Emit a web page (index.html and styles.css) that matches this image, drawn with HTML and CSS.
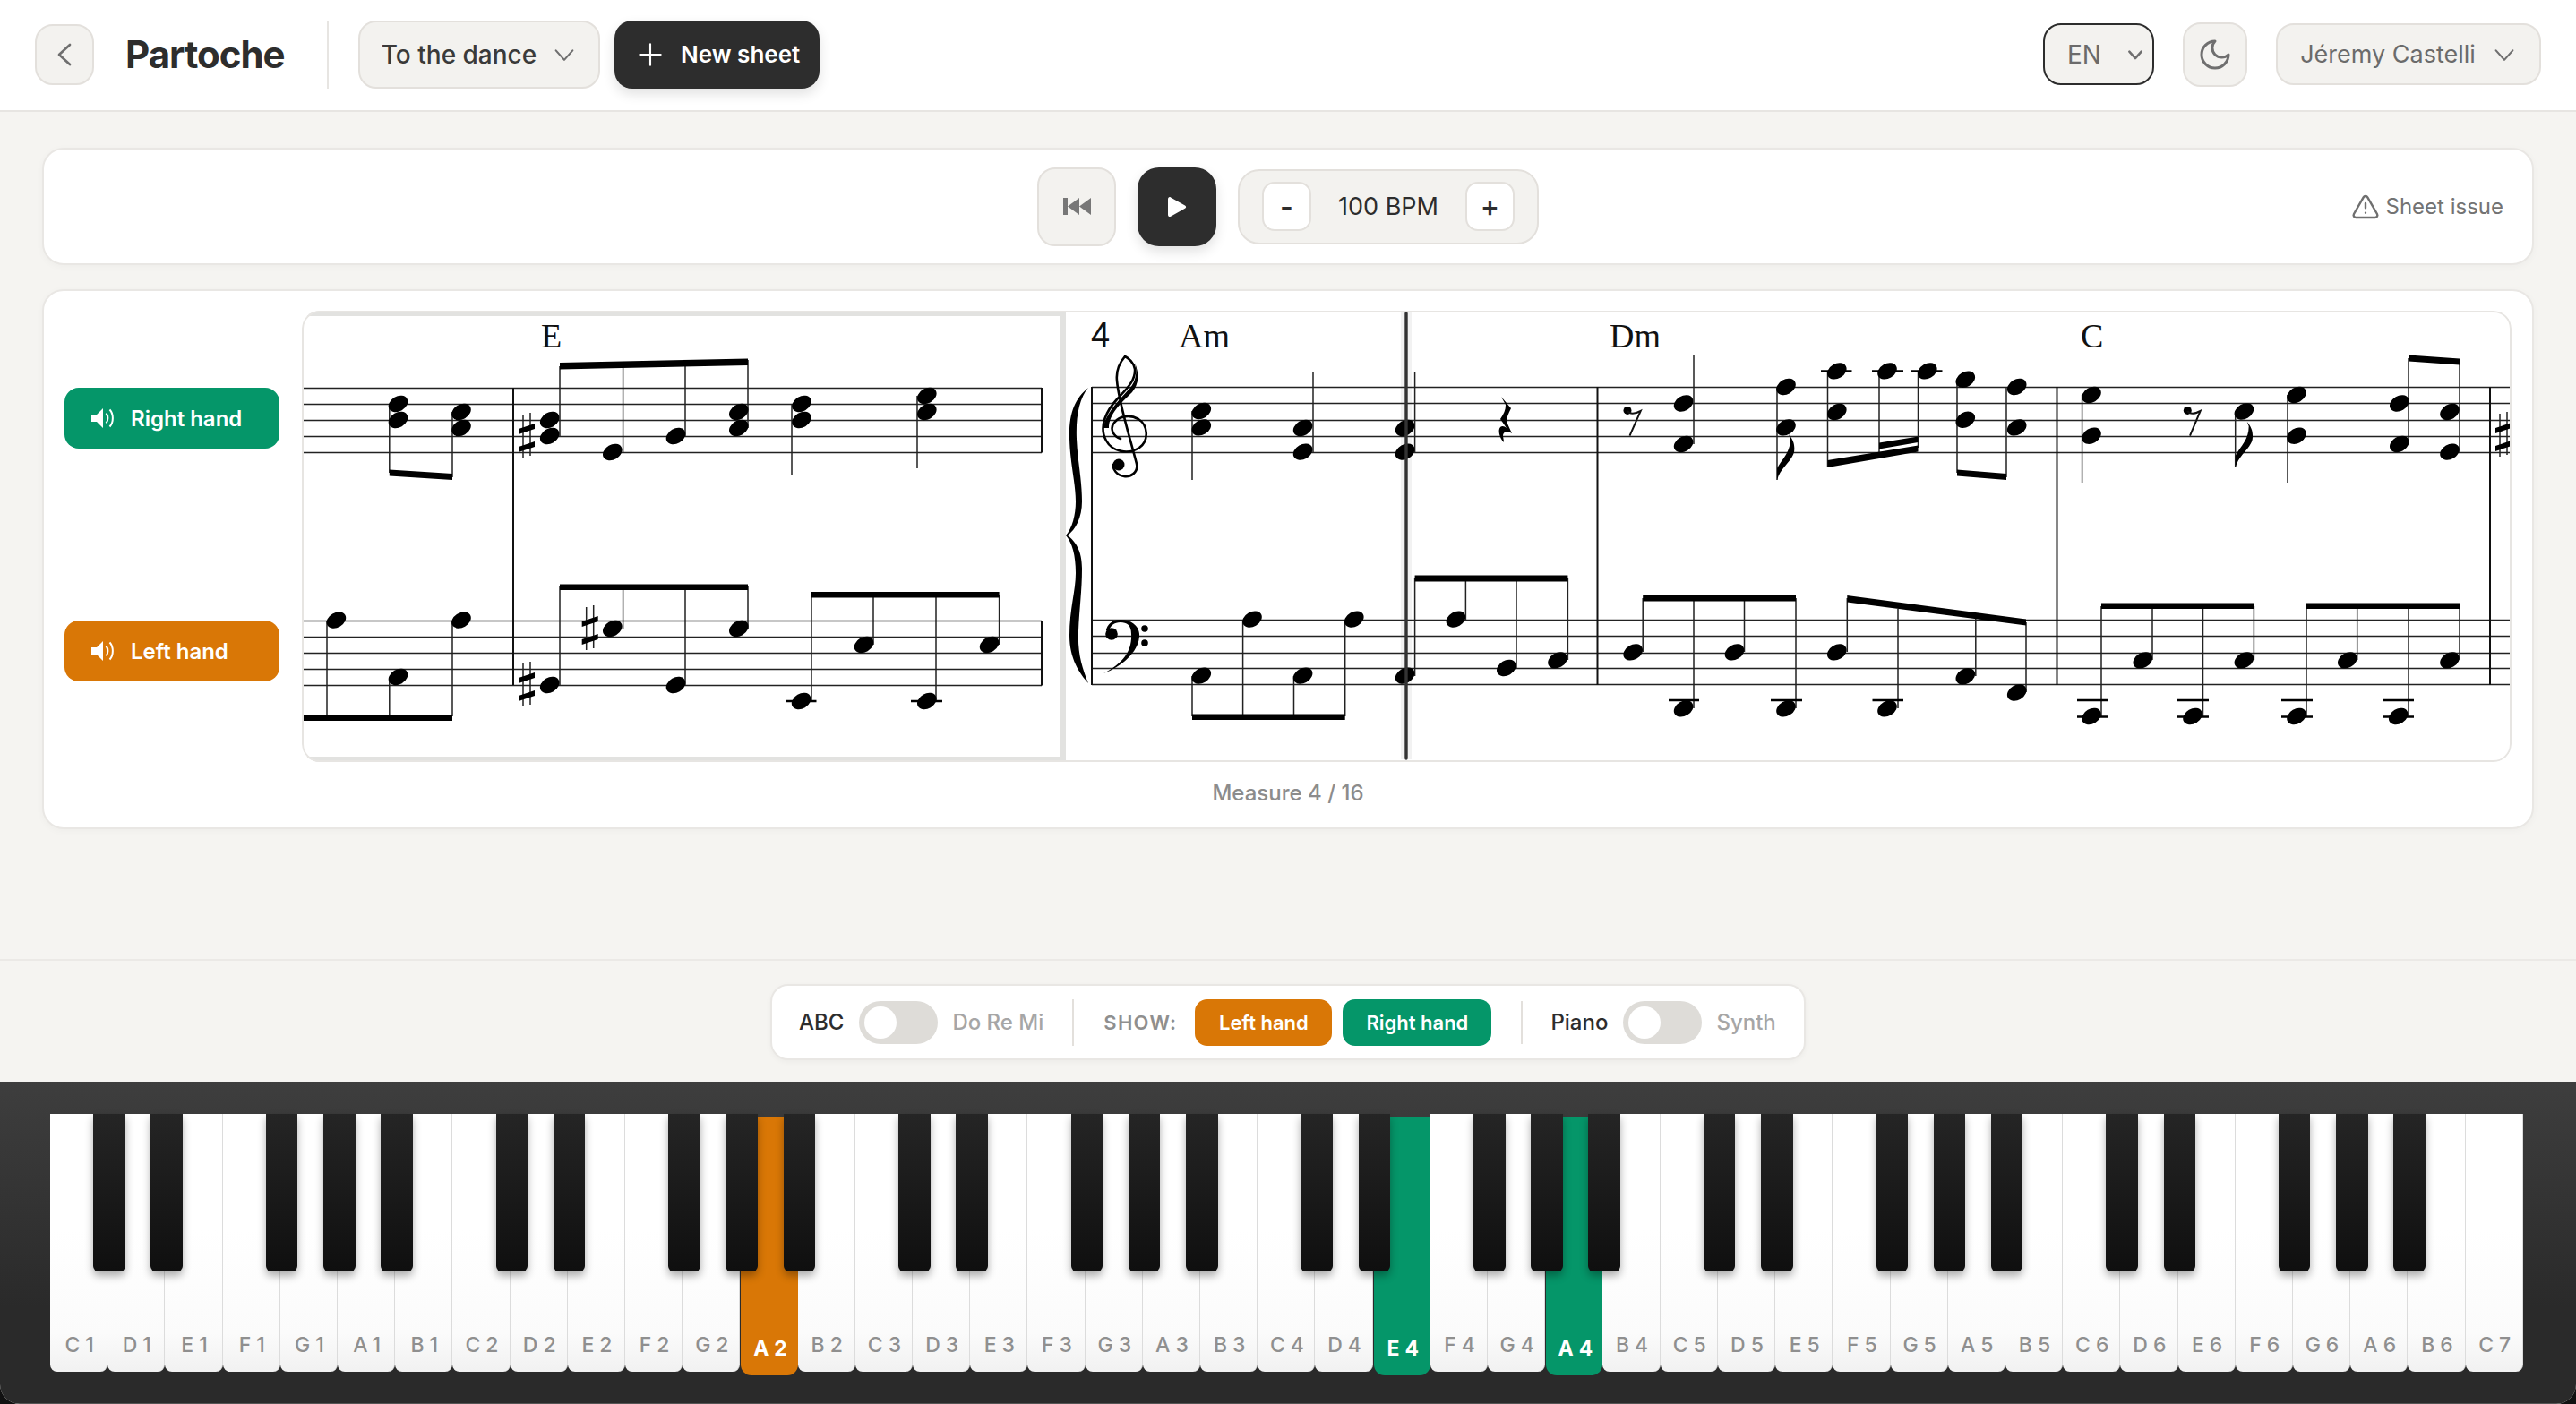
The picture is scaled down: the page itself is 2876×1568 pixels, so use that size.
FILE: index.html
```html
<!DOCTYPE html>
<html lang="en">
<head>
<meta charset="utf-8">
<title>Partoche</title>
<link rel="stylesheet" href="styles.css">
</head>
<body>
<div class="app">
  <header class="topbar">
    <button class="ctl back"><svg class="ico" width="36" height="36" viewBox="0 0 24 24"><path d="M16 4.600 8 12l8 7.400"/></svg></button>
    <div class="brand">Partoche</div>
    <div class="vsep"></div>
    <button class="ctl sheet-select">To the dance<svg class="ico" width="28" height="28" viewBox="0 0 24 24"><path d="m4 8 8 9 8-9"/></svg></button>
    <button class="new-sheet"><svg class="ico-w" width="28" height="28" viewBox="0 0 24 24"><path d="M12 2v20M2 12h20"/></svg>New sheet</button>
    <div class="spacer"></div>
    <button class="ctl lang">EN<svg class="ico" width="20" height="20" viewBox="0 0 24 24"><path d="m4 8 8 9 8-9"/></svg></button>
    <button class="ctl theme"><svg class="ico" width="40" height="40" viewBox="0 0 24 24"><path d="M12 3a6 6 0 0 0 9 9 9 9 0 1 1-9-9Z"/></svg></button>
    <button class="ctl user">Jéremy Castelli<svg class="ico" width="28" height="28" viewBox="0 0 24 24"><path d="m4 8 8 9 8-9"/></svg></button>
  </header>

  <main class="main">
    <section class="card transport">
      <div></div>
      <div class="transport-center">
        <button class="ctl t-btn"><svg width="31" height="19" viewBox="0 0 31 19"><path d="M0 0h5v19H0zM5 9.500 18 0v19zM18 9.500 31 0v19z" fill="#777"/></svg></button>
        <button class="t-btn play"><svg width="24" height="24" viewBox="0 0 24 24"><path d="M2 3.500C2 1.500 3.500.6 5 1.400l16 9c1.500.9 1.500 2.500 0 3.300l-16 9c-1.500.8-3 0-3-2z" fill="#fff"/></svg></button>
        <div class="tempo">
          <button class="step">-</button>
          <span class="bpm">100 BPM</span>
          <button class="step">+</button>
        </div>
      </div>
      <button class="issue"><svg class="ico-g" width="32" height="32" viewBox="0 0 24 24"><path d="m21.730 18-8-14a2 2 0 0 0-3.480 0l-8 14A2 2 0 0 0 4 21h16a2 2 0 0 0 1.730-3"/><path d="M12 9v4M12 17h.01"/></svg>Sheet issue</button>
    </section>

    <section class="card score-card">
      <div class="score-row">
        <div class="hands">
          <button class="hand green"><svg class="spk" width="26" height="24" viewBox="0 0 26 24"><path d="M0 8h6l7-7v22l-7-7H0z" fill="#fff"/><path d="M16.500 6.500c2.500 3 2.500 8 0 11M20.500 2.500c4.500 5 4.500 14 0 19" fill="none" stroke="#fff" stroke-width="2"/></svg>Right hand</button>
          <button class="hand orange"><svg class="spk" width="26" height="24" viewBox="0 0 26 24"><path d="M0 8h6l7-7v22l-7-7H0z" fill="#fff"/><path d="M16.500 6.500c2.500 3 2.500 8 0 11M20.500 2.500c4.500 5 4.500 14 0 19" fill="none" stroke="#fff" stroke-width="2"/></svg>Left hand</button>
        </div>
        <div class="score-box">
          <svg class="score" viewBox="337 347 2467 504" width="2467" height="504">
            <defs>
              <ellipse id="n" rx="11.500" ry="8.300" transform="rotate(-30)"/>
              <g id="s">
                <path class="st" d="M-4-23V25M4-25V23"/>
                <path class="bm" d="M-9-7 9-13V-7L-9-1zM-9 13 9 7V13L-9 19z"/>
              </g>
            </defs>

            <!-- page highlight -->
            <rect class="hl" x="334" y="350" width="853" height="498"/>

            <!-- staff lines -->
            <path class="staff" d="M337 433.500H1163M337 451.500H1163M337 469.500H1163M337 487.500H1163M337 505.500H1163M337 693.500H1163M337 711.500H1163M337 729.500H1163M337 747.500H1163M337 765.500H1163"/>
            <path class="staff" d="M1219 432.500H2803M1219 450.500H2803M1219 469.500H2803M1219 487.500H2803M1219 505.500H2803M1219 692.500H2803M1219 710.500H2803M1219 729.500H2803M1219 746.500H2803M1219 764.500H2803"/>

            <!-- bar lines -->
            <path class="bar" d="M573 433V765M1163 433V505.500M1163 693V765.500M1219 432V765M1783.500 432V765M2296.500 432V765M2780 432V765"/>

            <!-- chord names -->
            <text class="chord" x="604" y="388">E</text>
            <text class="num" x="1218" y="387">4</text>
            <text class="chord" x="1316" y="388">Am</text>
            <text class="chord" x="1797" y="388">Dm</text>
            <text class="chord" x="2323" y="388">C</text>

            <!-- stems -->
            <path class="st" d="M434.800 451V528M505 460V533M625 409V487M695.600 406V505M765 404V487M835 402V478M884 451V531M1024 442V523
              M365 693V800M434.800 756V800M505 693V800M625 655V765M695.600 655V702M765 655V765M835 655V702M906 664V783M975 664V720M1045 664V783M1115.600 664V720
              M1331 459V536M1466 415V505M1579.600 415V505M1891 397V496M1984 432V536M2040.500 414V521M2098 414V508M2141.500 414V500M2185 424V528M2240 432V533M2324.600 441V539M2495.700 459V522M2554 441V539M2689 400V496M2746 404V505
              M1331 755V800M1387.600 692V800M1444.500 755V800M1501.700 692V800M1579.600 646V755M1636.400 646V692M1693 646V746M1750.400 646V737M1834.200 668V728M1891 668V791M1947.500 668V728M2005 668V791M2062.300 668V728M2119 680V791M2205.800 688V755M2262 695V773M2346 677V800M2403 677V737M2459.500 677V800M2516.400 677V737M2575 677V800M2631.700 677V737M2689 677V800M2746 677V737"/>

            <!-- beams -->
            <path class="bm" d="M434.800 524.500 505 529V536L434.800 531.500zM625 405 835 400.500V408L625 412.500zM337 798H505V805H337zM625 652.500H835V659H625zM906 661H1115.600V667.500H906z
              M1331 797.500H1501.700V804H1331zM1579.600 642.500H1750.400V649.500H1579.600zM1834.200 665H2005V671.500H1834.200zM2062.300 665 2262 691.500V698.500L2062.300 672.500zM2040.500 514 2141.500 497.500V504.500L2040.500 522zM2098 494.500 2141.500 487.500V494L2098 501.500zM2185 524.500 2240 529V536L2185 531.500zM2689 396.500 2746 400.500V407.500L2689 403.500zM2346 673.500H2516.400V680H2346zM2575 673.500H2746V680H2575z"/>

            <!-- ledger lines -->
            <path class="led" d="M878 783H911.500M1017 783H1052M2033 414.500H2067.500M2090 414.500H2125M2134 414.500H2168.500M1863 782H1897M1977 782H2012M2090.500 782H2125M2319 782H2353M2319 800.500H2353M2431 782H2466M2431 800.500H2466M2547 782H2582M2547 800.500H2582M2660 782H2695M2660 800.500H2695"/>

            <!-- note heads, left page -->
            <use href="#n" x="444.500" y="451"/><use href="#n" x="444.500" y="469"/><use href="#n" x="515" y="460"/><use href="#n" x="515" y="478"/>
            <use href="#n" x="613.700" y="469"/><use href="#n" x="613.700" y="487"/><use href="#n" x="683.800" y="505"/><use href="#n" x="754.500" y="487"/>
            <use href="#n" x="824.800" y="460"/><use href="#n" x="824.800" y="478"/><use href="#n" x="895" y="451"/><use href="#n" x="895" y="469"/>
            <use href="#n" x="1034.800" y="442"/><use href="#n" x="1034.800" y="460"/>
            <use href="#n" x="375.400" y="692.600"/><use href="#n" x="444.500" y="756"/><use href="#n" x="515" y="692.600"/>
            <use href="#n" x="613.700" y="765"/><use href="#n" x="683.800" y="702"/><use href="#n" x="754.500" y="765"/><use href="#n" x="824.800" y="702"/>
            <use href="#n" x="894.600" y="783"/><use href="#n" x="964.500" y="720"/><use href="#n" x="1034.800" y="783"/><use href="#n" x="1104.600" y="720"/>
            <use href="#s" x="588" y="486"/><use href="#s" x="588" y="764"/><use href="#s" x="658.700" y="701"/><use href="#s" x="2795" y="485"/>

            <!-- note heads, right page upper -->
            <use href="#n" x="1341.300" y="459"/><use href="#n" x="1341.300" y="477.400"/><use href="#n" x="1454.600" y="478"/><use href="#n" x="1454.600" y="504.600"/>
            <use href="#n" x="1568.600" y="478"/><use href="#n" x="1568.600" y="504.600"/><use href="#n" x="1879.600" y="450.500"/><use href="#n" x="1879.600" y="496"/>
            <use href="#n" x="1994" y="432"/><use href="#n" x="1994" y="477.400"/><use href="#n" x="2050.800" y="414.400"/><use href="#n" x="2050.800" y="460"/>
            <use href="#n" x="2107" y="414.400"/><use href="#n" x="2151.800" y="414.400"/><use href="#n" x="2194.300" y="423.700"/><use href="#n" x="2194.300" y="468.800"/>
            <use href="#n" x="2251.700" y="432"/><use href="#n" x="2251.700" y="477.400"/><use href="#n" x="2335" y="441"/><use href="#n" x="2335" y="486.700"/>
            <use href="#n" x="2505.400" y="459.500"/><use href="#n" x="2564" y="441"/><use href="#n" x="2564" y="486.700"/>
            <use href="#n" x="2678.800" y="450.500"/><use href="#n" x="2678.800" y="496"/><use href="#n" x="2735" y="460"/><use href="#n" x="2735" y="504.600"/>

            <!-- note heads, right page lower -->
            <use href="#n" x="1341.300" y="754.600"/><use href="#n" x="1398" y="691.600"/><use href="#n" x="1454.600" y="754.600"/><use href="#n" x="1511.800" y="691.600"/>
            <use href="#n" x="1568.600" y="754.600"/><use href="#n" x="1625.400" y="691.600"/><use href="#n" x="1681.800" y="746"/><use href="#n" x="1739" y="737.400"/>
            <use href="#n" x="1823.200" y="728.400"/><use href="#n" x="1879.600" y="791.400"/><use href="#n" x="1936.500" y="728.400"/><use href="#n" x="1994" y="791.400"/>
            <use href="#n" x="2050.800" y="728.400"/><use href="#n" x="2107" y="791.400"/><use href="#n" x="2194.300" y="755.300"/><use href="#n" x="2251.700" y="773.500"/>
            <use href="#n" x="2335" y="800"/><use href="#n" x="2392.300" y="737.400"/><use href="#n" x="2448" y="800"/><use href="#n" x="2505.400" y="737.400"/>
            <use href="#n" x="2564" y="800"/><use href="#n" x="2620.800" y="737.400"/><use href="#n" x="2677.700" y="800"/><use href="#n" x="2735" y="737.400"/>

            <!-- flags -->
            <path class="bm" d="M1984 536V523C1990 512 1999 505 1999 490L1997 485C2003 492 2004 498 2003 505C2000 516 1988 522 1984 536ZM2495.700 522V509C2501.700 498 2510.700 491 2510.700 476L2508.700 471C2514.700 478 2515.700 484 2514.700 491C2511.700 502 2499.700 508 2495.700 522Z"/>

            <!-- rests -->
            <path class="bm" d="M1676 443 1687 456C1684 462 1682 466 1682 471L1688 484C1684 481 1679 481 1678 486C1678 489 1679 491 1679 494C1674 489 1672 480 1675 477C1677 475 1680 476 1682 478L1675 468C1679 462 1681 458 1681 452Z"/>
            <circle cx="1817" cy="458.400" r="4.500"/><path class="thin" d="M1817 459C1820 463 1826 462 1831.700 459L1819.500 486.700"/>
            <circle cx="2442.300" cy="458.400" r="4.500"/><path class="thin" d="M2442.300 459C2445 463 2451 462 2456.600 459L2445 486.700"/>

            <!-- brace -->
            <path class="bm" d="M1215 433C1200 445 1193 462 1194 490C1195 520 1201 540 1201 560C1201 575 1197 590 1190 598C1197 606 1201 620 1201 640C1201 660 1194 680 1194 710C1194 735 1205 752 1215 763C1208 745 1203 730 1204 705C1205 680 1208 660 1208 635C1208 615 1201 605 1192 598C1201 591 1208 578 1208 560C1208 535 1203 515 1202 490C1201 465 1205 445 1215 433Z"/>

            <!-- treble clef -->
            <path class="clef" d="M1251 490C1242 487 1239 478 1244 472C1250 464 1262 463 1271 468C1282 475 1283 492 1272 500C1260 508 1242 505 1235 492C1226 476 1236 458 1247 446C1258 434 1268 425 1267 412C1266 405 1260 400 1256 398C1250 405 1246 415 1247 425C1249 450 1262 490 1269 518C1271 528 1262 533 1255 532C1247 531 1242 524 1243 519"/>
            <path class="bm" d="M1232 478C1234 462 1250 446 1261 434C1268 426 1270 416 1267 405C1272 418 1272 428 1264 438C1252 450 1238 462 1238 478z"/>
            <circle cx="1249" cy="519" r="6.500"/>

            <!-- bass clef -->
            <path class="bm" d="M1232 752C1255 740 1264 726 1263 708C1263 698 1258 695 1251 695C1244 695 1239 699 1238 705L1235 704C1236 697 1243 691.500 1251 692C1264 692 1273 700 1272 711C1271 728 1252 745 1232 752Z"/>
            <circle cx="1241" cy="708" r="6.800"/><circle cx="1278" cy="702" r="3.800"/><circle cx="1278" cy="718" r="3.800"/>

            <!-- playhead -->
            <path class="glow" d="M1570 349V848"/>
            <path class="head" d="M1570 350V847"/>

            <rect class="frame" x="338" y="348" width="2465" height="502" rx="19"/>
          </svg>
        </div>
      </div>
      <div class="measure">Measure 4 / 16</div>
    </section>
  </main>

  <div class="options-bar">
    <div class="options">
      <span class="opt on">ABC</span>
      <span class="toggle"><i></i></span>
      <span class="opt off">Do Re Mi</span>
      <span class="osep s1"></span>
      <span class="show">SHOW:</span>
      <button class="pill orange">Left hand</button>
      <button class="pill green">Right hand</button>
      <span class="osep s2"></span>
      <span class="opt on">Piano</span>
      <span class="toggle"><i></i></span>
      <span class="opt off">Synth</span>
    </div>
  </div>

  <section class="keyboard">
    <div class="keys">
      <div class="key"><div class="face"><span>C1</span></div><b></b></div>
      <div class="key"><div class="face"><span>D1</span></div><b></b></div>
      <div class="key"><div class="face"><span>E1</span></div></div>
      <div class="key"><div class="face"><span>F1</span></div><b></b></div>
      <div class="key"><div class="face"><span>G1</span></div><b></b></div>
      <div class="key"><div class="face"><span>A1</span></div><b></b></div>
      <div class="key"><div class="face"><span>B1</span></div></div>
      <div class="key"><div class="face"><span>C2</span></div><b></b></div>
      <div class="key"><div class="face"><span>D2</span></div><b></b></div>
      <div class="key"><div class="face"><span>E2</span></div></div>
      <div class="key"><div class="face"><span>F2</span></div><b></b></div>
      <div class="key"><div class="face"><span>G2</span></div><b></b></div>
      <div class="key"><div class="face act-o"><span>A2</span></div><b></b></div>
      <div class="key"><div class="face"><span>B2</span></div></div>
      <div class="key"><div class="face"><span>C3</span></div><b></b></div>
      <div class="key"><div class="face"><span>D3</span></div><b></b></div>
      <div class="key"><div class="face"><span>E3</span></div></div>
      <div class="key"><div class="face"><span>F3</span></div><b></b></div>
      <div class="key"><div class="face"><span>G3</span></div><b></b></div>
      <div class="key"><div class="face"><span>A3</span></div><b></b></div>
      <div class="key"><div class="face"><span>B3</span></div></div>
      <div class="key"><div class="face"><span>C4</span></div><b></b></div>
      <div class="key"><div class="face"><span>D4</span></div><b></b></div>
      <div class="key"><div class="face act-g"><span>E4</span></div></div>
      <div class="key"><div class="face"><span>F4</span></div><b></b></div>
      <div class="key"><div class="face"><span>G4</span></div><b></b></div>
      <div class="key"><div class="face act-g"><span>A4</span></div><b></b></div>
      <div class="key"><div class="face"><span>B4</span></div></div>
      <div class="key"><div class="face"><span>C5</span></div><b></b></div>
      <div class="key"><div class="face"><span>D5</span></div><b></b></div>
      <div class="key"><div class="face"><span>E5</span></div></div>
      <div class="key"><div class="face"><span>F5</span></div><b></b></div>
      <div class="key"><div class="face"><span>G5</span></div><b></b></div>
      <div class="key"><div class="face"><span>A5</span></div><b></b></div>
      <div class="key"><div class="face"><span>B5</span></div></div>
      <div class="key"><div class="face"><span>C6</span></div><b></b></div>
      <div class="key"><div class="face"><span>D6</span></div><b></b></div>
      <div class="key"><div class="face"><span>E6</span></div></div>
      <div class="key"><div class="face"><span>F6</span></div><b></b></div>
      <div class="key"><div class="face"><span>G6</span></div><b></b></div>
      <div class="key"><div class="face"><span>A6</span></div><b></b></div>
      <div class="key"><div class="face"><span>B6</span></div></div>
      <div class="key"><div class="face"><span>C7</span></div></div>
    </div>
  </section>
</div>
</body>
</html>
```
FILE: styles.css
```css
* { box-sizing: border-box; }
html, body { margin: 0; height: 100%; background: #111; }
body { font-family: Inter, "Liberation Sans", sans-serif; color: #2d2d2d; overflow: hidden; }
button { font: inherit; color: inherit; cursor: pointer; padding: 0; }

.app { display: flex; flex-direction: column; height: 1568px; background: #f5f4f1; border-radius: 0 0 22px 22px; overflow: hidden; }

/* Top bar */
.topbar { flex: none; height: 125px; display: flex; align-items: center; padding: 0 39px 2px; background: #fff; border-bottom: 2px solid #e7e5e2; }
.ctl { display: inline-flex; align-items: center; justify-content: center; background: #f3f2ef; border: 2px solid #e3e0dc; border-radius: 20px; }
.ico, .ico-w, .ico-g { fill: none; stroke-linecap: round; stroke-linejoin: round; }
.ico { stroke: #6f6f6f; stroke-width: 1.800; }
.ico-w { stroke: #fff; stroke-width: 1.800; }
.ico-g { stroke: #6f6f6f; stroke-width: 1.800; flex: none; }
.back { width: 66px; height: 68px; }
.brand { width: 178px; margin-left: 35px; font-size: 42px; font-weight: 700; letter-spacing: -1px; white-space: nowrap; color: #2d2d2d; }
.vsep { width: 2px; height: 76px; margin-left: 47px; background: #e7e5e2; }
.sheet-select { width: 270px; height: 76px; margin-left: 33px; gap: 17px; font-size: 28px; font-weight: 500; color: #3a3a3a; }
.new-sheet { display: inline-flex; align-items: center; gap: 20px; width: 229px; height: 76px; margin-left: 16px; padding-left: 26px; font-size: 26px; font-weight: 600; color: #fff; background: #2d2d2d; border: none; border-radius: 20px; box-shadow: 0 6px 14px rgba(0,0,0,.12); }
.spacer { flex: 1; }
.lang { width: 124px; height: 69px; justify-content: space-between; padding: 0 9px 0 25px; font-size: 28px; color: #6b6b6b; border-color: #2d2d2d; border-width: 2.500px; }
.lang .ico { stroke-width: 3; }
.theme { width: 72px; height: 72px; margin-left: 32px; }
.user { width: 296px; height: 69px; margin-left: 32px; gap: 18px; font-size: 27px; color: #6b6b6b; }

/* Main */
.main { flex: 1; min-height: 0; display: flex; flex-direction: column; gap: 28px; padding: 40px 47px 0 47px; }
.card { background: #fff; border: 2px solid #e9e7e4; border-radius: 24px; box-shadow: 0 2px 8px rgba(0,0,0,.03); }
.transport { flex: none; height: 131px; display: grid; grid-template-columns: 1fr auto 1fr; align-items: center; }
.transport-center { display: flex; align-items: center; gap: 24px; }
.t-btn { width: 88px; height: 88px; }
.play { display: inline-flex; align-items: center; justify-content: center; background: #2d2d2d; border: none; border-radius: 24px; box-shadow: 0 6px 14px rgba(0,0,0,.12); }
.tempo { display: flex; align-items: center; justify-content: space-between; width: 336px; height: 84px; padding: 0 25px; background: #f3f2ef; border: 2px solid #e3e0dc; border-radius: 24px; }
.step { width: 55px; height: 55px; font-size: 32px; font-weight: 500; line-height: 1; background: #fff; border: 2px solid #e3e0dc; border-radius: 14px; }
.bpm { font-size: 27px; color: #2d2d2d; }
.issue { justify-self: end; display: inline-flex; align-items: center; gap: 6px; margin-right: 32px; background: none; border: none; font-size: 24px; color: #737373; }

.score-card { flex: none; height: 603px; margin-top: -1px; padding: 22px 23px 0; }
.score-row { display: flex; gap: 25px; }
.hands { flex: none; width: 240px; display: flex; flex-direction: column; gap: 192px; padding-top: 86px; }
.hand { display: flex; align-items: center; gap: 18px; width: 240px; height: 68px; padding-left: 30px; border: none; border-radius: 16px; font-size: 24px; font-weight: 600; color: #fff; }
.green { background: #059669; }
.orange { background: #d97706; }
.spk { flex: none; }
.score-box { flex: none; width: 2467px; height: 504px; background: #fff; border-radius: 20px; overflow: hidden; }
.score { display: block; }
.score use, .score circle { fill: #000; }
.hl { fill: #fff; stroke: #e2e2e0; stroke-width: 6; }
.staff { fill: none; stroke: #222; stroke-width: 1.500; }
.bar { fill: none; stroke: #111; stroke-width: 2; }
.st { fill: none; stroke: #222; stroke-width: 1.500; }
.thin { fill: none; stroke: #111; stroke-width: 2; }
.bm { fill: #000; stroke: none; }
.led { fill: none; stroke: #000; stroke-width: 2.500; }
.clef { fill: none; stroke: #000; stroke-width: 2.600; stroke-linecap: round; }
.chord { font-family: "Liberation Serif", serif; font-size: 38px; fill: #111; }
.num { font-family: "Liberation Sans", sans-serif; font-size: 38px; fill: #111; }
.glow { fill: none; stroke: rgba(0,0,0,.05); stroke-width: 12; }
.head { fill: none; stroke: #333; stroke-width: 3.400; stroke-linecap: round; }
.frame { fill: none; stroke: #e7e5e2; stroke-width: 2; }
.measure { margin-top: 20px; text-align: center; font-size: 24px; font-weight: 500; color: #8c8c8c; }

/* Options */
.options-bar { flex: none; height: 137px; display: flex; align-items: flex-start; justify-content: center; padding-top: 26px; border-top: 2px solid #ebe9e6; }
.options { display: flex; align-items: center; width: 1156px; height: 85px; padding: 0 30px; white-space: nowrap; background: #fff; border: 2px solid #e9e7e4; border-radius: 20px; box-shadow: 0 2px 6px rgba(0,0,0,.04); }
.opt { font-size: 24px; font-weight: 500; }
.opt.on { color: #2d2d2d; }
.opt.off { color: #a6a6a6; }
.toggle { flex: none; position: relative; width: 88px; height: 48px; margin: 0 16px 0 17px; background: #dedcd8; border-radius: 24px; }
.toggle i { position: absolute; left: 6px; top: 6px; width: 36px; height: 36px; background: #fff; border-radius: 50%; }
.osep { flex: none; width: 2px; background: #e3e0dc; }
.s1 { height: 52px; margin: 0 33px 0 32px; }
.s2 { height: 48px; margin: 0 31px 0 33px; }
.show { font-size: 22px; font-weight: 600; letter-spacing: 1.300px; color: #8f8f8f; margin-right: 20px; }
.pill { flex: none; height: 52px; border: none; border-radius: 14px; font-size: 22px; font-weight: 600; color: #fff; }
.pill.orange { width: 153px; margin-right: 12px; }
.pill.green { width: 166px; }

/* Keyboard */
.keyboard { flex: none; height: 360px; padding: 36px 59px 36px 56px; background: linear-gradient(#3e3e3e, #2a2a2a 70%); border-bottom: 1px solid #555; }
.keys { display: flex; height: 288px; }
.key { position: relative; flex: 1; min-width: 0; }
.face { display: flex; align-items: flex-end; justify-content: center; height: 100%; padding: 0 0 16px 8px; background: linear-gradient(#fff 45%, #fbfbfb 85%, #f1f1f1); border-right: 1px solid #dcdcdc; border-radius: 0 0 8px 8px; font-size: 23px; font-weight: 500; letter-spacing: 6px; color: #8f8f8f; }
.face span { display: block; line-height: 28px; }
.act-o, .act-g { position: relative; height: calc(100% + 1px); top: 3px; margin-left: 1px; border-right: none; border-radius: 0 0 12px 12px; font-weight: 700; color: #fff; }
.act-o { background: #d97706; }
.act-g { background: #059669; }
.key b { position: absolute; z-index: 2; top: 0; right: -19.500px; width: 35.500px; height: 176px; background: linear-gradient(#252525, #0f0f0f); border-radius: 0 0 6px 6px; box-shadow: 0 5px 10px rgba(0,0,0,.32); }
```
